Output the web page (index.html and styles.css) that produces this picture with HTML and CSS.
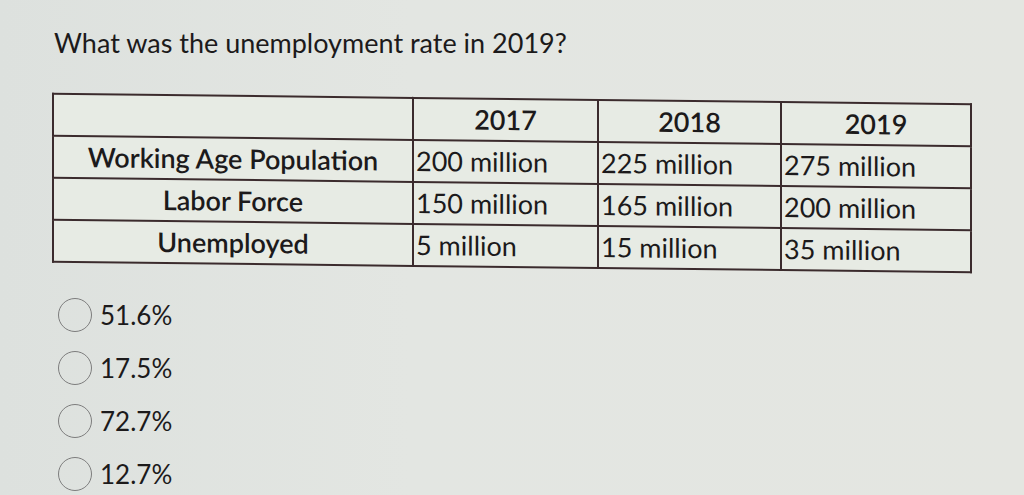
FILE: index.html
```html
<!DOCTYPE html>
<html>
<head>
<meta charset="utf-8">
<link rel="stylesheet" href="styles.css">
</head>
<body>
<div class="page">
  <h1 class="question">What was the unemployment rate in 2019?</h1>
  <table class="data">
    <colgroup>
      <col class="c-label"><col class="c-2017"><col class="c-2018"><col class="c-2019">
    </colgroup>
    <tr class="head">
      <th></th><th>2017</th><th>2018</th><th>2019</th>
    </tr>
    <tr>
      <th class="label">Working Age Population</th><td>200 million</td><td>225 million</td><td>275 million</td>
    </tr>
    <tr>
      <th class="label">Labor Force</th><td>150 million</td><td>165 million</td><td>200 million</td>
    </tr>
    <tr>
      <th class="label">Unemployed</th><td>5 million</td><td>15 million</td><td>35 million</td>
    </tr>
  </table>
  <ul class="options">
    <li class="option"><span class="radio"></span><span class="opt-text">51.6%</span></li>
    <li class="option"><span class="radio"></span><span class="opt-text">17.5%</span></li>
    <li class="option"><span class="radio"></span><span class="opt-text">72.7%</span></li>
    <li class="option"><span class="radio"></span><span class="opt-text">12.7%</span></li>
  </ul>
</div>
</body>
</html>
```
FILE: styles.css
```css
html, body {
  margin: 0;
  padding: 0;
}
body {
  width: 1024px;
  height: 495px;
  overflow: hidden;
  background: linear-gradient(90deg, #dde1de 0%, #e3e6e2 40%, #e4e6e1 100%);
  font-family: Lato, "Open Sans", sans-serif;
  color: #1c1a1b;
}
.page {
  padding: 0 0 0 54px;
}
.question {
  margin: 0;
  padding-top: 27px;
  font-size: 27px;
  font-weight: 400;
  line-height: 32px;
  letter-spacing: 0;
}
.data {
  margin: 39px 0 0 -2px;
  border-collapse: collapse;
  width: 918px;
  table-layout: fixed;
  transform: skewY(0.65deg);
  background: #e7ebe4;
}
.c-label { width: 360px; }
.c-2017 { width: 185px; }
.c-2018 { width: 183px; }
.c-2019 { width: 190px; }
.data th, .data td {
  border: 2px solid #3b2b2d;
  height: 40px;
  padding: 0 2px;
  font-size: 27px;
  line-height: 30px;
  white-space: nowrap;
}
.data th {
  font-weight: 600;
  text-align: center;
}
.data td {
  font-weight: 400;
  text-align: left;
}
.options {
  list-style: none;
  margin: 30px 0 0 4px;
  padding: 0;
  display: flex;
  flex-direction: column;
  gap: 19px;
}
.option {
  display: flex;
  align-items: center;
  gap: 8px;
  height: 34px;
}
.radio {
  width: 32px;
  height: 32px;
  border: 1.5px solid #7d7d7d;
  border-radius: 50%;
  flex: none;
}
.opt-text {
  font-size: 26px;
  line-height: 30px;
}
```
